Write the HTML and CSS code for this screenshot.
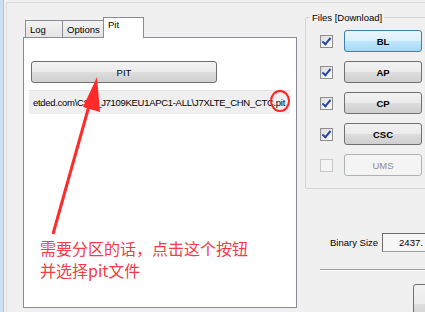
FILE: index.html
```html
<!DOCTYPE html>
<html lang="en">
<head>
  <meta charset="UTF-8" />
  <title>Odin - Pit</title>
  <link rel="stylesheet" href="styles.css">
</head>
<body>
  <div class="window">
    <div class="edge"></div>
    <div class="frame">
      <div class="tabs-area">
        <div class="tab-strip">
          <div class="tab tab-log">Log</div>
          <div class="tab tab-options">Options</div>
          <div class="tab tab-pit active">Pit</div>
        </div>
        <div class="tab-panel">
          <button class="btn pit-btn">PIT</button>
          <div class="path-field">etded.com\CSC_J7109KEU1APC1-ALL\J7XLTE_CHN_CTC.pit</div>
        </div>
      </div>
      <div class="side">
        <fieldset class="files">
          <legend>Files [Download]</legend>
          <div class="file-row"><span class="check on"></span><button class="btn file-btn hover">BL</button></div>
          <div class="file-row"><span class="check on"></span><button class="btn file-btn">AP</button></div>
          <div class="file-row"><span class="check on"></span><button class="btn file-btn">CP</button></div>
          <div class="file-row"><span class="check on"></span><button class="btn file-btn">CSC</button></div>
          <div class="file-row"><span class="check off"></span><button class="btn file-btn" disabled>UMS</button></div>
        </fieldset>
        <div class="size-row">
          <span class="size-label">Binary Size</span>
          <div class="size-box">2437.</div>
        </div>
        <div class="sep"></div>
        <button class="btn start-btn"></button>
      </div>
    </div>
  </div>

  <div class="note">
    <svg class="note-marks" width="425" height="312" viewBox="0 0 425 312">
      <line x1="53" y1="234" x2="89" y2="106" stroke="#ff2a2a" stroke-width="3" />
      <polygon points="97,77 100,112 83,107" fill="#ff2a2a" />
      <ellipse cx="280" cy="101" rx="9" ry="10" fill="none" stroke="#ff2020" stroke-width="2" />
    </svg>
    <p class="note-text">需要分区的话，点击这个按钮<br>并选择pit文件</p>
  </div>
</body>
</html>
```

FILE: styles.css
```css
body {
  margin: 0;
  background: #f0f0f0;
  font-family: "Liberation Sans", Arial, sans-serif;
  font-size: 9.5px;
  color: #000;
  position: relative;
  width: 425px;
  height: 312px;
  overflow: hidden;
}
.window {
  display: flex;
  height: 312px;
}
.edge {
  flex: none;
  width: 3px;
  background: #cddff3;
  border-right: 1px solid #b4c4d6;
}
.frame {
  flex: 1;
  min-width: 0;
  display: flex;
  margin: 2px 0 0 2px;
  border-top: 1px solid #dcdcdc;
  border-left: 1px solid #dcdcdc;
}
.tabs-area {
  flex: none;
  margin-left: 16px;
  padding-top: 14px;
  width: 274px;
}
.tab-strip {
  display: flex;
  align-items: flex-end;
  height: 20px;
  padding-left: 2px;
}
.tab {
  height: 17px;
  line-height: 18px;
  padding-left: 4px;
  box-sizing: border-box;
  border: 1px solid #898c95;
  border-bottom: none;
  background: linear-gradient(#f3f3f3, #e4e4e4);
  margin-left: -1px;
}
.tab-log {
  margin-left: 0;
  width: 38px;
}
.tab-options {
  width: 42px;
}
.tab-pit {
  width: 41px;
}
.tab.active {
  height: 21px;
  line-height: 14px;
  background: #fff;
  margin-bottom: -1px;
  position: relative;
  z-index: 1;
}
.tab-panel {
  height: 271px;
  box-sizing: border-box;
  border: 1px solid #898c95;
  background: #fff;
  padding: 23px 0 0 5px;
}
.btn {
  font-family: inherit;
  font-size: 9.5px;
  height: 22px;
  box-sizing: border-box;
  border: 1px solid #707070;
  border-radius: 3px;
  background: linear-gradient(#f2f2f2 0%, #ebebeb 49%, #dddddd 50%, #cfcfcf 100%);
  color: #000;
  padding: 0;
  display: block;
}
.pit-btn {
  width: 186px;
  margin-left: 2px;
}
.path-field {
  width: 261px;
  height: 24px;
  box-sizing: border-box;
  margin-top: 7px;
  padding-left: 4px;
  line-height: 23px;
  letter-spacing: -0.3px;
  background: #efefef;
  border-top: 1px solid #e2e2e2;
  white-space: nowrap;
  overflow: hidden;
}
.side {
  flex: 1;
  min-width: 0;
  padding-left: 8px;
}
.files {
  margin: 9px -10px 0 0;
  padding: 7px 0 12px 14px;
  border: 1px solid #d5d5d5;
  border-radius: 2px;
}
.files legend {
  padding: 0 2px;
  margin-left: -10px;
}
.file-row {
  display: flex;
  align-items: center;
  gap: 11px;
  margin-top: 9px;
}
.file-row:first-of-type {
  margin-top: 0;
}
.check {
  width: 13px;
  height: 13px;
  box-sizing: border-box;
  border: 1px solid #8e8f8f;
  background: linear-gradient(135deg, #dcdcdc, #fdfdfd);
  position: relative;
}
.check.on::after {
  content: "";
  position: absolute;
  left: 3px;
  top: 0px;
  width: 3px;
  height: 7px;
  border: solid #2a46a8;
  border-width: 0 2px 2px 0;
  transform: rotate(40deg);
}
.check.off {
  border-color: #c7c7c7;
  background: #f4f4f4;
}
.file-btn {
  width: 78px;
  font-weight: bold;
  font-size: 9.5px;
}
.file-btn.hover {
  border-color: #3c7fb1;
  background: linear-gradient(#eaf6fd 0%, #d9f0fc 49%, #bee6fd 50%, #a7d9f5 100%);
}
.file-btn:disabled {
  border-color: #adb2b5;
  background: #f4f4f4;
  color: #8d8d8d;
  font-weight: normal;
}
.size-row {
  display: flex;
  align-items: center;
  margin-top: 44px;
  padding-left: 25px;
  gap: 4px;
  white-space: nowrap;
}
.size-label {
  flex: none;
}
.size-box {
  flex: none;
  width: 60px;
  height: 19px;
  box-sizing: border-box;
  border: 1px solid #a0a0a0;
  border-top-color: #6d6d6d;
  border-left-color: #6d6d6d;
  background: #f7f7f7;
  padding-left: 16px;
  line-height: 17px;
}
.sep {
  margin: 17px 0 0 15px;
  border-top: 1px solid #a0a0a0;
  border-bottom: 1px solid #fff;
}
.start-btn {
  width: 40px;
  height: 40px;
  margin: 13px 0 0 108px;
}
.note {
  position: absolute;
  left: 0;
  top: 0;
  width: 425px;
  height: 312px;
  pointer-events: none;
}
.note-marks {
  position: absolute;
  left: 0;
  top: 0;
}
.note-text {
  position: absolute;
  left: 40px;
  top: 237px;
  margin: 0;
  font-family: "Noto Sans CJK SC", sans-serif;
  font-size: 16px;
  line-height: 22px;
  color: #f23c46;
}
```
